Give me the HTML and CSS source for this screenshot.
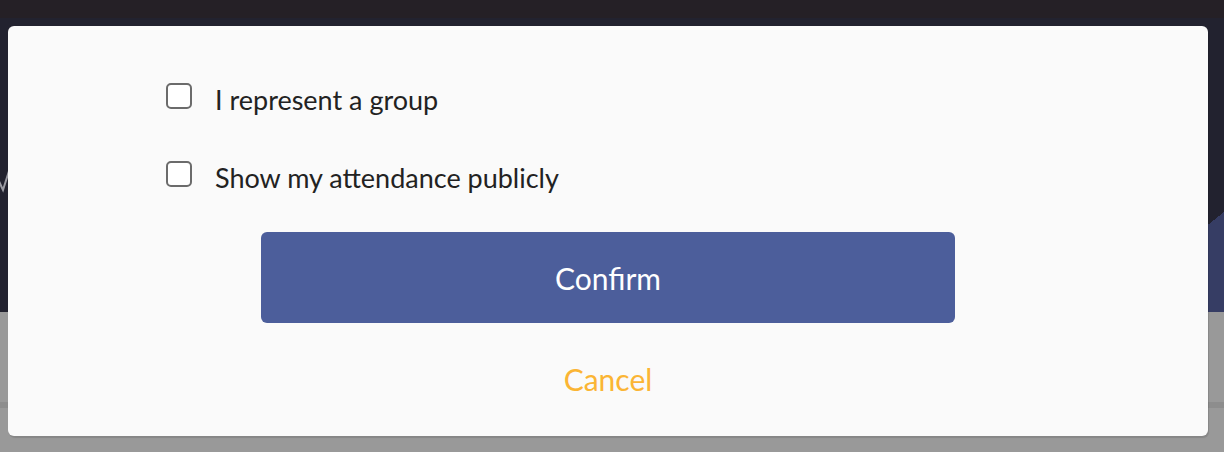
FILE: index.html
```html
<!DOCTYPE html>
<html lang="en">
<head>
<meta charset="utf-8">
<title>Attend</title>
<link rel="stylesheet" href="styles.css">
</head>
<body>
<div class="page">
  <div class="topbar"></div>
  <div class="hero">
    <svg class="hero-mark" width="20" height="30" viewBox="0 0 20 30"><polyline points="-3,12 3,25 9,6" fill="none" stroke="#9a9aa2" stroke-width="2"/></svg>
  </div>
  <div class="lower">
    <div class="lower-line"></div>
  </div>
</div>

<div class="modal">
  <div class="options">
    <label class="option"><span class="box"></span><span class="opt-text">I represent a group</span></label>
    <label class="option"><span class="box"></span><span class="opt-text">Show my attendance publicly</span></label>
  </div>
  <button class="confirm">Confirm</button>
  <div class="cancel">Cancel</div>
</div>
</body>
</html>
```

FILE: styles.css
```css
html, body {
  margin: 0;
  padding: 0;
}
body {
  width: 1224px;
  height: 452px;
  overflow: hidden;
  font-family: "Lato", "Liberation Sans", sans-serif;
  background: #979797;
}
.page {
  display: flex;
  flex-direction: column;
  height: 452px;
}
.topbar {
  height: 18px;
  background: #252026;
}
.hero {
  height: 294px;
  background: linear-gradient(141deg, #22222f 921px, #363d64 921px);
  position: relative;
}
.hero-mark {
  position: absolute;
  left: 0;
  top: 147px;
}
.lower {
  flex: 1;
  background: #999999;
  padding-top: 90px;
}
.lower-line {
  height: 6px;
  background: #8d8d8d;
}
.modal {
  position: absolute;
  left: 8px;
  top: 26px;
  width: 1200px;
  height: 410px;
  background: #fafafa;
  border-radius: 6px;
  box-shadow: 1px 2px 1px rgba(0, 0, 0, 0.12);
  box-sizing: border-box;
  padding-top: 57px;
  display: flex;
  flex-direction: column;
}
.options {
  display: flex;
  flex-direction: column;
  gap: 52px;
  padding-left: 158px;
}
.option {
  display: flex;
  align-items: center;
  gap: 23px;
  height: 26px;
}
.box {
  width: 26px;
  height: 26px;
  box-sizing: border-box;
  border: 2px solid #6b6b6b;
  border-radius: 5px;
  background: #ffffff;
}
.opt-text {
  font-size: 27px;
  color: #222222;
  line-height: 26px;
  padding-top: 8px;
}
.confirm {
  margin: 45px 0 0 253px;
  width: 694px;
  height: 91px;
  border: none;
  border-radius: 6px;
  background: #4c5e9b;
  color: #ffffff;
  font-family: inherit;
  font-size: 30px;
  padding: 0;
}
.cancel {
  margin-top: 36px;
  text-align: center;
  font-size: 30px;
  line-height: 40px;
  color: #fbb534;
}
```
